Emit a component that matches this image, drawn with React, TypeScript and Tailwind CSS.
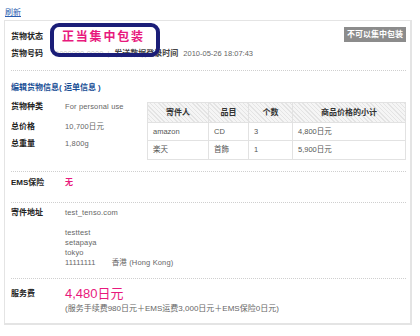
import React from "react";

const font = { fontFamily: '"Liberation Sans", "Noto Sans CJK SC", sans-serif' };

function Sep({ mt }: { mt: string }) {
  return <div className={`${mt} border-t border-dotted border-[#cfcfcf]`} />;
}

export default function App() {
  return (
    <div className="relative w-[420px] h-[336px] bg-white text-[#222]" style={font}>
      <div className="h-[20px] pl-[5px] pt-[8px]">
        <span className="block w-fit text-[8px] leading-[10px] text-[#2a5db0] underline">刷新</span>
      </div>
      <div className="ml-[4px] w-[408px] border-t border-l border-r-2 border-b-2 border-[#e4e4e4] pl-[6px] pr-[4px] pt-[6px] pb-[9px]">
        {/* row A */}
        <div className="flex items-start h-[17px]">
          <div className="w-[51px] mt-[5px] text-[8px] leading-[10px] font-bold">货物状态</div>
          <div className="mt-[3px] text-[12px] leading-[14px] font-bold tracking-[1.8px] text-[#e8197d]">正当集中包装</div>
          <div className="ml-auto h-[15px] px-[3px] bg-[#8c8c8c] text-white text-[8px] leading-[15px] font-bold">不可以集中包装</div>
        </div>
        {/* row B */}
        <div className="mt-[5px] flex items-center h-[10px] text-[7.5px] leading-[10px]">
          <div className="w-[44px] text-[8px] font-bold">货物号码</div>
          <span className="text-[#c8c8c8]">0000000-0000</span>
          <span className="ml-[4px] text-[#c8c8c8]">|</span>
          <span className="ml-[5px] text-[8px] font-bold text-[#444]">发送数据登录时间</span>
          <span className="ml-[5px] text-[#666]">2010-05-26 18:07:43</span>
        </div>
        <Sep mt="mt-[11px]" />
        <div className="mt-[12px] text-[8px] leading-[10px] font-bold text-[#1a4f96]">编辑货物信息( 运单信息 )</div>
        <div className="mt-[9px] flex">
          <div className="w-[136px] text-[7.5px] leading-[10px] text-[#666] tracking-[0.15px]">
            <div className="flex h-[20px]">
              <div className="w-[54px] text-[8px] font-bold text-[#222] tracking-normal">货物种类</div>
              <div>For personal use</div>
            </div>
            <div className="flex h-[17px]">
              <div className="w-[54px] text-[8px] font-bold text-[#222] tracking-normal">总价格</div>
              <div>10,700日元</div>
            </div>
            <div className="flex h-[10px]">
              <div className="w-[54px] text-[8px] font-bold text-[#222] tracking-normal">总重量</div>
              <div>1,800g</div>
            </div>
          </div>
          <div className="flex-1">
            <table className="w-full border-collapse text-[7.5px] text-[#555]">
              <thead>
                <tr className="h-[20px] bg-[repeating-linear-gradient(45deg,#e4e4e4_0px,#e4e4e4_1px,#f5f5f5_1px,#f5f5f5_3px)]">
                  <th className="w-[61px] border border-[#e2e2e2] text-[8px] font-bold text-[#333]">寄件人</th>
                  <th className="w-[40px] border border-[#e2e2e2] text-[8px] font-bold text-[#333]">品目</th>
                  <th className="w-[44px] border border-[#e2e2e2] text-[8px] font-bold text-[#333]">个数</th>
                  <th className="border border-[#e2e2e2] text-[8px] font-bold text-[#333]">商品价格的小计</th>
                </tr>
              </thead>
              <tbody>
                <tr className="h-[18px]">
                  <td className="border border-[#e2e2e2] pl-[5px]">amazon</td>
                  <td className="border border-[#e2e2e2] pl-[5px]">CD</td>
                  <td className="border border-[#e2e2e2] pl-[5px]">3</td>
                  <td className="border border-[#e2e2e2] pl-[5px]">4,800日元</td>
                </tr>
                <tr className="h-[19px]">
                  <td className="border border-[#e2e2e2] pl-[5px]">楽天</td>
                  <td className="border border-[#e2e2e2] pl-[5px]">首飾</td>
                  <td className="border border-[#e2e2e2] pl-[5px]">1</td>
                  <td className="border border-[#e2e2e2] pl-[5px]">5,900日元</td>
                </tr>
              </tbody>
            </table>
          </div>
        </div>
        <Sep mt="mt-[11px]" />
        <div className="mt-[6px] flex h-[10px] leading-[10px]">
          <div className="w-[54px] text-[8px] font-bold">EMS保险</div>
          <div className="text-[8px] font-bold text-[#e8197d]">无</div>
        </div>
        <Sep mt="mt-[14px]" />
        <div className="mt-[5px] flex leading-[10px]">
          <div className="w-[54px] text-[8px] font-bold">寄件地址</div>
          <div className="text-[7.5px] text-[#666] tracking-[0.15px]">
            <div>test_tenso.com</div>
            <div className="h-[10px]" />
            <div>testtest</div>
            <div>setapaya</div>
            <div>tokyo</div>
            <div>
              11111111<span className="ml-[16px]">香港 (Hong Kong)</span>
            </div>
          </div>
        </div>
        <Sep mt="mt-[10px]" />
        <div className="mt-[8px] flex items-center h-[14px]">
          <div className="w-[54px] text-[8px] leading-[10px] font-bold">服务费</div>
          <div className="text-[13px] leading-[14px] text-[#e8197d]">4,480日元</div>
        </div>
        <div className="mt-[3px] pl-[54px] text-[8px] leading-[10px] text-[#666]">
          (服务手续费980日元＋EMS运费3,000日元＋EMS保险0日元)
        </div>
      </div>
      {/* annotation overlay */}
      <div className="absolute left-[50px] top-[23px] w-[110px] h-[34px] border-4 border-[#1b1e78] rounded-[9px]" />
    </div>
  );
}
